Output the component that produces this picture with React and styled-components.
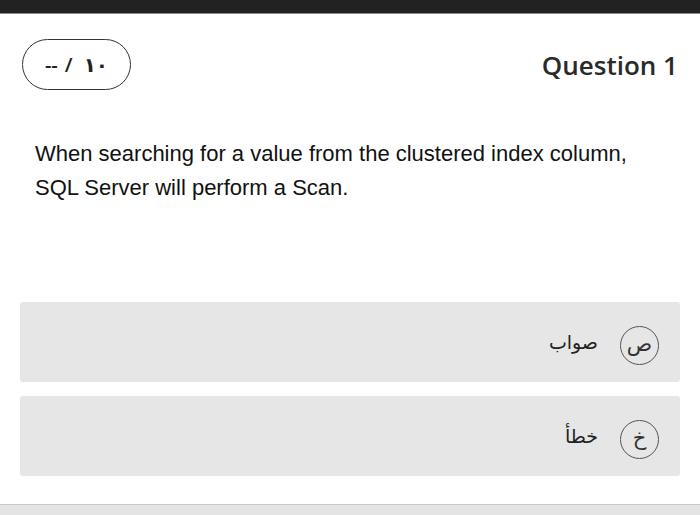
import styled, { createGlobalStyle } from 'styled-components';

const GlobalStyle = createGlobalStyle`
  html, body {
    margin: 0;
    padding: 0;
    background: #ffffff;
  }
  * { box-sizing: border-box; }
`;

const Page = styled.div`
  width: 700px;
  height: 515px;
  display: flex;
  flex-direction: column;
  overflow: hidden;
  background: #fff;
`;

const TopBar = styled.div`
  height: 14px;
  flex-shrink: 0;
  background: #222222;
  border-bottom: 1px solid #8a8a8a;
`;

const Header = styled.div`
  display: flex;
  justify-content: space-between;
  align-items: center;
  padding: 25px 22px 0 22px;
`;

const ScorePill = styled.div`
  width: 109px;
  height: 51px;
  border: 1.5px solid #333;
  border-radius: 26px;
  display: flex;
  align-items: center;
  justify-content: center;
  gap: 7px;
  font-family: "Open Sans", "DejaVu Sans", sans-serif;
  font-size: 20px;
  font-weight: 600;
  color: #222;
  direction: ltr;
`;

const Digits = styled.span`
  font-family: "DejaVu Sans", sans-serif;
  font-size: 20px;
  letter-spacing: 5px;
  margin-left: 4px;
`;

const QuestionTitle = styled.h2`
  margin: 0;
  font-family: "Open Sans", sans-serif;
  font-size: 26px;
  font-weight: 600;
  color: #2a2a2a;
`;

const Prompt = styled.p`
  margin: 47px 0 0 35px;
  font-family: "Liberation Sans", Arial, sans-serif;
  font-size: 22px;
  line-height: 34px;
  color: #111;
`;

const Options = styled.div`
  display: flex;
  flex-direction: column;
  gap: 14px;
  margin: 97px 20px 0 20px;
`;

const Option = styled.div`
  height: 80px;
  background: #e6e6e6;
  border-radius: 3px;
  display: flex;
  direction: rtl;
  align-items: center;
  gap: 22px;
  padding-right: 21px;
`;

const Letter = styled.div`
  width: 39px;
  height: 39px;
  margin-top: 7px;
  border-radius: 50%;
  border: 1.5px solid #555;
  display: flex;
  align-items: center;
  justify-content: center;
  font-family: "DejaVu Sans", sans-serif;
  font-size: 21px;
  color: #333;
  padding-bottom: 3px;
`;

const Label = styled.span`
  font-family: "DejaVu Sans", sans-serif;
  font-size: 19px;
  color: #222;
`;

const Footer = styled.div`
  margin-top: auto;
  height: 11px;
  border-top: 1px solid #c8c8c8;
  background: #e4e4e4;
`;

const options = [
  { letter: 'ص', label: 'صواب' },
  { letter: 'خ', label: 'خطأ' },
];

export default function App() {
  return (
    <>
      <GlobalStyle />
      <Page>
        <TopBar />
        <Header>
          <ScorePill>
            <span>--</span>
            <span>/</span>
            <Digits>١٠</Digits>
          </ScorePill>
          <QuestionTitle>Question 1</QuestionTitle>
        </Header>
        <Prompt>
          When searching for a value from the clustered index column,
          <br />
          SQL Server will perform a Scan.
        </Prompt>
        <Options>
          {options.map(o => (
            <Option key={o.letter}>
              <Letter>{o.letter}</Letter>
              <Label>{o.label}</Label>
            </Option>
          ))}
        </Options>
        <Footer />
      </Page>
    </>
  );
}
